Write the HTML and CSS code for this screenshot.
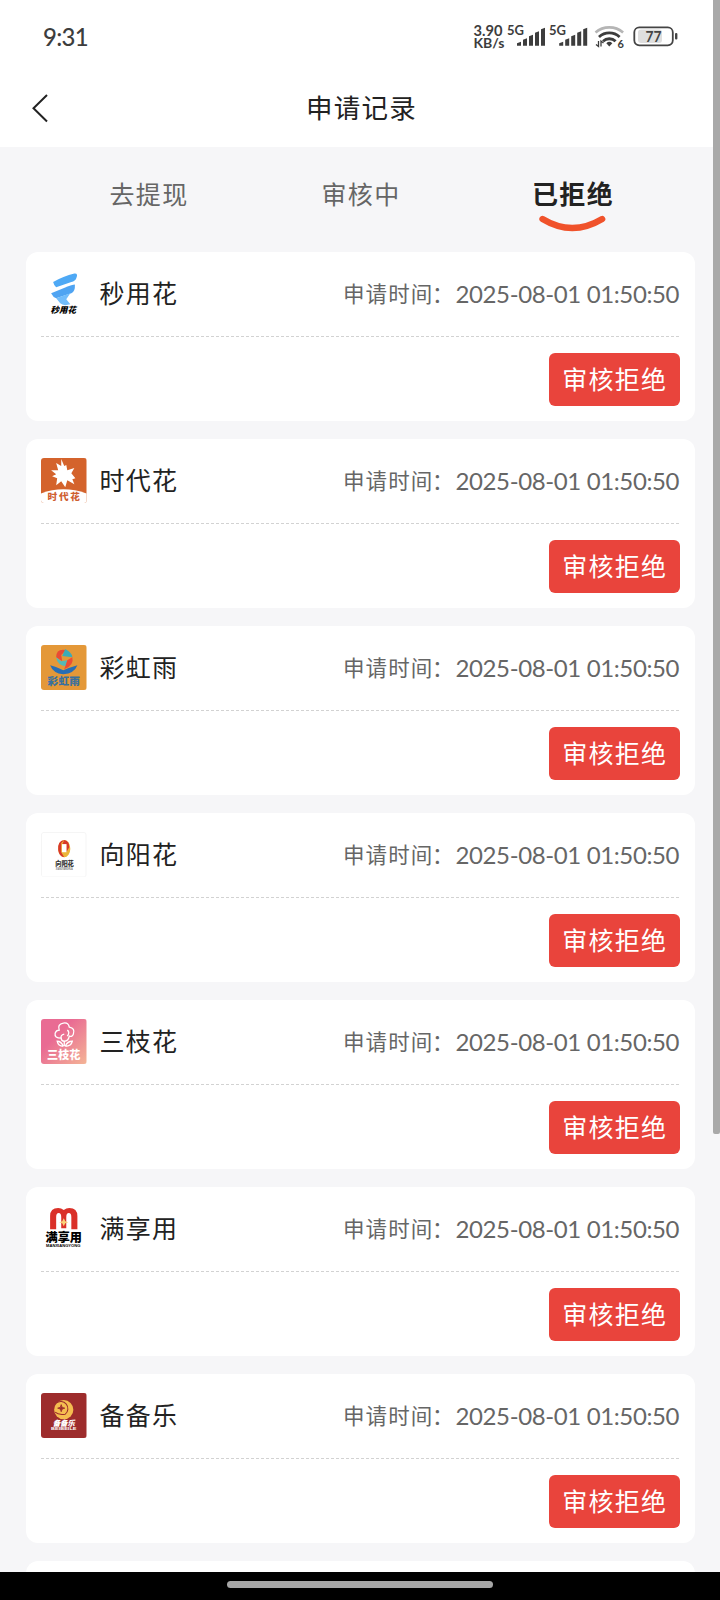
FILE: index.html
```html
<!DOCTYPE html>
<html lang="zh-CN">
<head>
<meta charset="utf-8">
<title>申请记录</title>
<link rel="stylesheet" href="styles.css">
</head>
<body>
<div class="screen">
  <header class="top">
    <div class="status">
      <span class="clock">9:31</span>
      <svg class="status-icons" width="210" height="30" viewBox="0 0 210 30">
        <g class="net">
          <text x="3.500" y="14.500" font-size="14.500" textLength="29" lengthAdjust="spacingAndGlyphs">3.90</text>
          <text x="3.500" y="26.700" font-size="13.500" textLength="31" lengthAdjust="spacingAndGlyphs">KB/s</text>
          <text x="37" y="14" font-size="14" textLength="17" lengthAdjust="spacingAndGlyphs">5G</text>
          <text x="79" y="14" font-size="14" textLength="17" lengthAdjust="spacingAndGlyphs">5G</text>
          <text x="147.500" y="27" font-size="11">6</text>
        </g>
        <g fill="#3d3d3d">
          <path id="bars" d="M47 22.200l4-1.500V24.700H47zM53 18.800l4-1.500v7.400H53zM59 15.300l4-1.500v10.900H59zM65 11.800l4-1.500v14.400H65zM71 8.300l4-1.500v17.900H71z"/>
          <use href="#bars" x="42.200"/>
          <path d="M139.300 25.500l-3-3.300a4.500 4.500 0 0 1 6 0z"/>
          <path d="M128.500 20v5.500l-2.500-2M131 25.500V20l2.500 2" stroke="#3d3d3d" stroke-width="1.300" fill="none"/>
        </g>
        <g fill="none" stroke="#3d3d3d" stroke-width="2.800">
          <path d="M125.500 11.500a21 21 0 0 1 27.600 0" stroke="#b5b5b5" stroke-width="2.600"/>
          <path d="M129 16a15 15 0 0 1 20.600 0"/>
          <path d="M133 20.300a9 9 0 0 1 12.600 0"/>
        </g>
        <rect x="168" y="8.500" width="24" height="13.500" rx="3" fill="#dedede"/>
        <rect x="164.300" y="6.300" width="38.500" height="18" rx="5" fill="none" stroke="#444" stroke-width="1.800"/>
        <rect x="205" y="12" width="2.400" height="6.500" rx="1" fill="#444"/>
        <text x="175.500" y="20.700" class="charge" textLength="16" lengthAdjust="spacingAndGlyphs">77</text>
      </svg>
    </div>
    <div class="nav">
      <svg class="back" width="20" height="32" viewBox="0 0 20 32"><path d="M16 3L2.500 16.200L16 29.500" fill="none" stroke="#222" stroke-width="2"/></svg>
      <h1 class="title">申请记录</h1>
    </div>
  </header>

  <nav class="tabs">
    <span class="tab">去提现</span>
    <span class="tab">审核中</span>
    <span class="tab active">已拒绝
      <svg class="smile" width="69" height="20" viewBox="0 0 69 20"><path d="M4.500 5Q34.300 23 64.200 5" fill="none" stroke="#f0522b" stroke-width="6.300" stroke-linecap="round"/></svg>
    </span>
  </nav>

  <main class="list">
    <section class="card">
      <div class="row">
        <svg class="logo" viewBox="0 0 45 45">
          <path d="M12 11Q22 5 33 2.500Q37 2 35 7Q34 10 30 11L15 16Q13 15 12 11z" fill="#4ea9f5"/>
          <path d="M10 22L27 15Q33 13 33.500 13.500Q34 20 30 22L15 27Q12 26 10 22z" fill="#4fa4f2"/>
          <path d="M15 27L29 22L25 28L29 33Q22 35 19 32z" fill="#72bdfb"/>
          <text x="9.500" y="41.500" class="mark" font-size="8.400" font-style="italic" textLength="25">秒用花</text>
        </svg>
        <span class="name">秒用花</span>
        <span class="label">申请时间<i class="colon">：</i></span><span class="date">2025-08-01 01:50:50</span>
      </div>
      <div class="foot"><span class="badge">审核拒绝</span></div>
    </section>

    <section class="card">
      <div class="row">
        <svg class="logo" viewBox="0 0 45 45">
          <rect width="45" height="45" fill="#d4632c"/>
          <path d="M0 35Q22 27 45 35V45H0z" fill="#fff"/>
          <path d="M20 1L23 8L25 7L26 12L33 10L30 15L34 20L31 21L33 26L26 22L24 29L20 23L15 27L16 20L11 18L15 16L10 12L17 12L15 5L20 8z" fill="#fff"/>
          <text x="6.500" y="42" class="mark" font-size="9.500" fill="#cf602f" textLength="32">时代花</text>
        </svg>
        <span class="name">时代花</span>
        <span class="label">申请时间<i class="colon">：</i></span><span class="date">2025-08-01 01:50:50</span>
      </div>
      <div class="foot"><span class="badge">审核拒绝</span></div>
    </section>

    <section class="card">
      <div class="row">
        <svg class="logo" viewBox="0 0 45 45">
          <rect width="45" height="45" fill="#e49838"/>
          <path d="M25 5Q15 3 15 12L21 16L20 10Z" fill="#e94b35"/>
          <path d="M24 4Q31 8 31 12L21 11z" fill="#3cabb8"/>
          <path d="M15 12Q16 20 25 21L26 15L20 16z" fill="#57b9b5"/>
          <path d="M31 12Q33 20 23 24L26 15z" fill="#ed4c35"/>
          <path d="M9 20Q14 21 22 25Q29 22 36 20Q33 28 22 29Q12 28 9 20z" fill="#276eb5"/>
          <text x="6.500" y="40" class="mark" font-size="10.500" fill="#38709f" textLength="32">彩虹雨</text>
        </svg>
        <span class="name">彩虹雨</span>
        <span class="label">申请时间<i class="colon">：</i></span><span class="date">2025-08-01 01:50:50</span>
      </div>
      <div class="foot"><span class="badge">审核拒绝</span></div>
    </section>

    <section class="card">
      <div class="row">
        <svg class="logo" viewBox="0 0 45 45">
          <rect x=".5" y=".5" width="44" height="44" rx="2" fill="#fff" stroke="#f5f5f5"/>
          <ellipse cx="23" cy="16.500" rx="6" ry="8.500" fill="#eab538"/>
          <path d="M23 8Q16 9 17 18Q18 24 23 25L20 20V11z" fill="#d8392a"/>
          <path d="M23 8Q28 9 28 15L25 20V12H21z" fill="#d8392a"/>
          <rect x="20.700" y="12" width="4.500" height="8" fill="#fff"/>
          <text x="14" y="33.500" class="mark" font-size="6.200" fill="#333" textLength="18.500">向阳花</text>
          <text x="14.500" y="37.200" class="tiny" font-size="2.800" fill="#777" textLength="17" lengthAdjust="spacingAndGlyphs">XIANGYANGHUA</text>
        </svg>
        <span class="name">向阳花</span>
        <span class="label">申请时间<i class="colon">：</i></span><span class="date">2025-08-01 01:50:50</span>
      </div>
      <div class="foot"><span class="badge">审核拒绝</span></div>
    </section>

    <section class="card">
      <div class="row">
        <svg class="logo" viewBox="0 0 45 45">
          <defs><linearGradient id="pink" x1="0" y1="0" x2="1" y2="1"><stop offset=".35" stop-color="#e96b93"/><stop offset="1" stop-color="#f4b596"/></linearGradient></defs>
          <rect width="45" height="45" fill="url(#pink)"/>
          <g fill="none" stroke="#fff" stroke-width="1.300">
            <path d="M20 19Q13 19 14 14Q15 11 18 11Q16 5 22 4Q27 3 28 8Q34 9 32 15Q31 18 28 17Q27 22 23 22Q20 22 20 19Q19 16 23 15M26 11Q29 13 26 17"/>
            <path d="M23 22V27M22 27Q20 22 16 22Q17 27 22 27M24 27Q26 22 31 22Q30 27 24 27"/>
          </g>
          <text x="6" y="39.500" class="mark" font-size="11" fill="#fff" textLength="33">三枝花</text>
        </svg>
        <span class="name">三枝花</span>
        <span class="label">申请时间<i class="colon">：</i></span><span class="date">2025-08-01 01:50:50</span>
      </div>
      <div class="foot"><span class="badge">审核拒绝</span></div>
    </section>

    <section class="card">
      <div class="row">
        <svg class="logo" viewBox="0 0 45 45">
          <path d="M9 23V10Q9 2 17 2Q20 2 22.500 4Q25 2 28 2Q36 2 36 10V23H30V11Q30 7 27.500 7Q25 7 25 11V22H20V11Q20 7 17.500 7Q15 7 15 11V23z" fill="#da3028"/>
          <path d="M22.500 12L24 15L27 16L24 17L22.500 20L21 17L18 16L21 15z" fill="#f9cf77"/>
          <text x="4.500" y="36" class="mark" font-size="12" textLength="36">满享用</text>
          <text x="5" y="41" class="tiny" font-size="4" textLength="34" lengthAdjust="spacingAndGlyphs">MANXIANGYONG</text>
        </svg>
        <span class="name">满享用</span>
        <span class="label">申请时间<i class="colon">：</i></span><span class="date">2025-08-01 01:50:50</span>
      </div>
      <div class="foot"><span class="badge">审核拒绝</span></div>
    </section>

    <section class="card">
      <div class="row">
        <svg class="logo" viewBox="0 0 45 45">
          <rect width="45" height="45" fill="#9d2c2c"/>
          <circle cx="22.500" cy="16.500" r="9.500" fill="#f5bd50"/>
          <path d="M15 10A7 7 0 1 1 24 21Q17 22 14 19" fill="none" stroke="#9d2c2c" stroke-width="1"/>
          <path d="M20 11.500Q20 15 23.500 15Q20 15 20 18.500Q20 15 16.500 15Q20 15 20 11.500z" fill="#9d2c2c" stroke="#9d2c2c" stroke-width=".9"/>
          <text x="11.500" y="33" class="mark" font-size="7.500" fill="#fff" font-style="italic" textLength="22">备备乐</text>
          <text x="10" y="37" class="tiny" font-size="4" fill="#fff" textLength="25" lengthAdjust="spacingAndGlyphs">BEIBEILE</text>
        </svg>
        <span class="name">备备乐</span>
        <span class="label">申请时间<i class="colon">：</i></span><span class="date">2025-08-01 01:50:50</span>
      </div>
      <div class="foot"><span class="badge">审核拒绝</span></div>
    </section>

    <section class="card"></section>
  </main>
  <footer class="home"><span class="handle"></span></footer>
  <div class="scrollbar"></div>
</div>
</body>
</html>
```
FILE: styles.css
```css
* { box-sizing: border-box; }
body { margin: 0; font-family: "Noto Sans CJK SC", sans-serif; color: #222; }
.screen { position: relative; width: 720px; height: 1600px; overflow: hidden; display: flex; flex-direction: column; background: #f6f6f8; }
.top { height: 147px; flex: none; background: #fff; }
.status { height: 72px; padding: 21px 40px 0 43px; display: flex; justify-content: space-between; }
.clock { font: 500 24px/32px Lato, sans-serif; letter-spacing: -.7px; color: #3d3d3d; }
.status-icons { display: block; font-family: Lato, sans-serif; }
.net { font-weight: 700; fill: #3d3d3d; }
.charge { font-size: 15px; font-weight: 700; fill: #444; }
.nav { height: 72px; display: grid; grid-template-columns: 60px 1fr 60px; align-items: center; }
.back { margin-left: 31px; }
.title { margin: 0; padding: 0 0 2px 3px; text-align: center; font-size: 26.500px; line-height: 38px; font-weight: 400; letter-spacing: 1.2px; }
.tabs { height: 105px; flex: none; padding: 0 41px 0 43px; display: grid; grid-template-columns: repeat(3, 1fr); }
.tab { position: relative; padding-top: 28px; text-align: center; font-size: 25px; line-height: 36px; letter-spacing: 1.3px; color: #666; }
.tab.active { color: #222; font-weight: 700; font-size: 26px; }
.smile { position: absolute; left: 71px; top: 67px; }
.list { flex: 1; min-height: 0; overflow: hidden; padding: 0 25px 0 26px; display: flex; flex-direction: column; gap: 18px; }
.card { height: 169px; flex: none; padding: 0 15px; background: #fff; border-radius: 12px; }
.row { height: 85px; padding-bottom: 2px; display: flex; align-items: center; background: repeating-linear-gradient(90deg, #d2d2d2 0 3px, transparent 3px 5px) left bottom / 100% 1px no-repeat; }
.logo { width: 45.500px; height: 45.500px; margin-right: 13px; border-radius: 3px; flex: none; }
.mark { font-family: "Noto Sans CJK SC", sans-serif; font-weight: 900; }
.tiny { font-family: "Liberation Sans", sans-serif; font-weight: 700; }
.name { flex: 1; padding-bottom: 3px; font-size: 25px; line-height: 36px; letter-spacing: 1.3px; }
.label { width: 112.500px; padding-bottom: 1px; font-size: 21.500px; line-height: 36px; letter-spacing: 1.1px; color: #666; white-space: nowrap; }
.colon { margin-left: -1.500px; font-style: normal; }
.date { width: 224.500px; font: 400 24px/36px Lato, sans-serif; letter-spacing: -.38px; color: #666; white-space: nowrap; }
.foot { padding-top: 16px; display: flex; justify-content: flex-end; }
.badge { width: 131.500px; height: 52.500px; padding-left: 1px; border-radius: 6px; background: #e9443c; color: #fff; text-align: center; font-size: 25px; line-height: 50px; letter-spacing: 1.2px; }
.home { height: 28px; flex: none; padding-top: 9px; background: #000; z-index: 1; }
.handle { display: block; width: 266px; height: 7px; margin-left: 227px; border-radius: 4px; background: #a6a6a6; }
.scrollbar { position: absolute; right: 0; top: 0; width: 7px; height: 1134px; background: #a9a9a9; border-radius: 0 0 2px 2px; }
```
